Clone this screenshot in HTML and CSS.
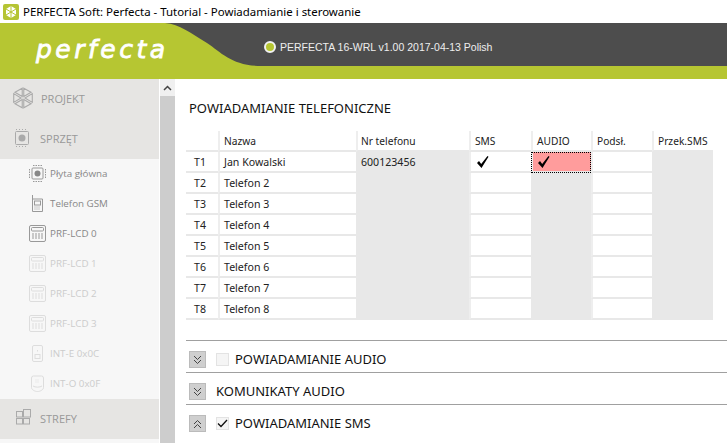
FILE: index.html
```html
<!DOCTYPE html>
<html lang="en">
<head>
    <meta charset="UTF-8">
    <title>PERFECTA Soft</title>
    <link rel="stylesheet" href="styles.css">
</head>
<body>
    <div class="titlebar">
        <svg class="app-icon" width="16" height="16" viewBox="0 0 16 16"><rect width="16" height="16" rx="2" fill="#b5c433"/><path d="M8 2l5 3v6l-5 3-5-3V5z" fill="#fff"/><path d="M8 2v12M3 5l10 6M13 5L3 11" stroke="#b5c433" stroke-width="1"/></svg>
        <span>PERFECTA Soft: Perfecta - Tutorial - Powiadamianie i sterowanie</span>
    </div>

    <div class="banner">
        <svg class="banner-bg" width="727" height="56" viewBox="0 0 727 56"><path d="M165 0C180 1 190 10 207 20C222 30 232 43 262 43H727V0Z" fill="#4d4d4d"/></svg>
        <div class="logo">perfecta</div>
        <div class="version"><span class="dot"></span>PERFECTA 16-WRL v1.00 2017-04-13 Polish</div>
    </div>

    <div class="main">
        <div class="sidebar">
            <div class="nav-head">
                <svg width="24" height="24" viewBox="0 0 22 22" fill="none" stroke="#aaa" stroke-width="1"><path d="M10.300 2v7.600L3.600 5.800zM11.700 2v7.600l6.700-3.800zM19.500 7v8l-6.700-4zM11.700 20v-7.600l6.700 3.800zM10.300 20v-7.600l-6.700 3.800zM2.500 7v8l6.700-4z"/></svg>
                <span>PROJEKT</span>
            </div>
            <div class="nav-head">
                <svg width="22" height="22" viewBox="0 0 22 22" fill="none" stroke="#aaa"><rect x="4.500" y="4.500" width="13" height="13" rx="1"/><circle cx="11" cy="11" r="3.500" fill="#aaa" stroke="none"/><path d="M5 2.500h12M5 19.500h12" stroke-dasharray="1 2"/></svg>
                <span>SPRZĘT</span>
            </div>
            <div class="nav-list">
                <div class="nav-item">
                    <svg width="17" height="17" viewBox="0 0 17 17" fill="none" stroke="#999"><rect x="3" y="3" width="11" height="11" rx="1"/><circle cx="8.500" cy="8.500" r="3" fill="#888" stroke="none"/><path d="M4 .5h10M4 16.500h10M.5 4v10M16.500 4v10" stroke-dasharray="1.500 1"/></svg>
                    <span>Płyta główna</span>
                </div>
                <div class="nav-item">
                    <svg width="17" height="17" viewBox="0 0 17 17" fill="none" stroke="#999"><path d="M3.500 0v4M3.500 4h10v12.500h-10z"/><rect x="5.500" y="6" width="6" height="4"/><path d="M5.500 12h6M5.500 14h6" stroke-dasharray="1 1"/></svg>
                    <span>Telefon GSM</span>
                </div>
                <div class="nav-item">
                    <svg width="17" height="17" viewBox="0 0 17 17" fill="none" stroke="#999"><rect x=".5" y=".5" width="16" height="16" rx="1.500"/><rect x="2.500" y="2.500" width="12" height="3.500" rx="1"/><path d="M3 9h11M3 11h11M3 13h11" stroke-dasharray="2 1"/></svg>
                    <span>PRF-LCD 0</span>
                </div>
                <div class="nav-item off">
                    <svg width="17" height="17" viewBox="0 0 17 17" fill="none" stroke="#ddd"><rect x=".5" y=".5" width="16" height="16" rx="1.500"/><rect x="2.500" y="2.500" width="12" height="3.500" rx="1"/><path d="M3 9h11M3 11h11M3 13h11" stroke-dasharray="2 1"/></svg>
                    <span>PRF-LCD 1</span>
                </div>
                <div class="nav-item off">
                    <svg width="17" height="17" viewBox="0 0 17 17" fill="none" stroke="#ddd"><rect x=".5" y=".5" width="16" height="16" rx="1.500"/><rect x="2.500" y="2.500" width="12" height="3.500" rx="1"/><path d="M3 9h11M3 11h11M3 13h11" stroke-dasharray="2 1"/></svg>
                    <span>PRF-LCD 2</span>
                </div>
                <div class="nav-item off">
                    <svg width="17" height="17" viewBox="0 0 17 17" fill="none" stroke="#ddd"><rect x=".5" y=".5" width="16" height="16" rx="1.500"/><rect x="2.500" y="2.500" width="12" height="3.500" rx="1"/><path d="M3 9h11M3 11h11M3 13h11" stroke-dasharray="2 1"/></svg>
                    <span>PRF-LCD 3</span>
                </div>
                <div class="nav-item off">
                    <svg width="17" height="17" viewBox="0 0 17 17" fill="none" stroke="#ddd"><rect x="3.500" y=".5" width="10" height="16" rx="1.500"/><rect x="6" y="9.500" width="5" height="4"/><path d="M8.500 5v1.500"/></svg>
                    <span>INT-E 0x0C</span>
                </div>
                <div class="nav-item off">
                    <svg width="17" height="17" viewBox="0 0 17 17" fill="none" stroke="#ddd"><path d="M2.500 3a2 2 0 0 1 2-2h8a2 2 0 0 1 2 2v9.500c0 2-3 4-6 4s-6-2-6-4z"/><path d="M4 11c2 1.500 7 1.500 9 0"/><path d="M6.500 5h4M6.500 7h4" stroke-dasharray="1 1"/></svg>
                    <span>INT-O 0x0F</span>
                </div>
            </div>
            <div class="nav-head">
                <svg width="22" height="22" viewBox="0 0 22 22" fill="none" stroke="#aaa"><rect x="5.500" y="4.500" width="6" height="5.500"/><rect x="5.500" y="11.500" width="6" height="5.500"/><rect x="12.500" y="11.500" width="6" height="5.500"/><rect x="12.500" y="2.500" width="7" height="7.500"/></svg>
                <span>STREFY</span>
            </div>
        </div>

        <div class="scrollbar">
            <svg class="scroll-up" width="9" height="6" viewBox="0 0 9 6" fill="none" stroke="#444" stroke-width="1.500"><path d="M1 5l3.500-3.500L8 5"/></svg>
            <div class="scroll-track"></div>
        </div>

        <div class="content">
            <h2 class="section-title">POWIADAMIANIE TELEFONICZNE</h2>
            <table class="phones">
                <thead>
                    <tr><th></th><th>Nazwa</th><th class="phone-col">Nr telefonu</th><th>SMS</th><th>AUDIO</th><th>Podsł.</th><th>Przek.SMS</th></tr>
                </thead>
                <tbody>
                    <tr>
                        <td class="num">T1</td><td>Jan Kowalski</td><td class="grey phone-col">600123456</td>
                        <td class="tick"><svg width="12" height="12" viewBox="0 0 12 12"><path d="M0 7l2-2 2.200 3L10.500 0l1 .8L4.500 12z" fill="#000"/></svg></td>
                        <td class="tick active"><svg width="12" height="12" viewBox="0 0 12 12"><path d="M0 7l2-2 2.200 3L10.500 0l1 .8L4.500 12z" fill="#000"/></svg></td>
                        <td></td><td class="grey"></td>
                    </tr>
                    <tr><td class="num">T2</td><td>Telefon 2</td><td class="grey"></td><td></td><td class="grey"></td><td></td><td class="grey"></td></tr>
                    <tr><td class="num">T3</td><td>Telefon 3</td><td class="grey"></td><td></td><td class="grey"></td><td></td><td class="grey"></td></tr>
                    <tr><td class="num">T4</td><td>Telefon 4</td><td class="grey"></td><td></td><td class="grey"></td><td></td><td class="grey"></td></tr>
                    <tr><td class="num">T5</td><td>Telefon 5</td><td class="grey"></td><td></td><td class="grey"></td><td></td><td class="grey"></td></tr>
                    <tr><td class="num">T6</td><td>Telefon 6</td><td class="grey"></td><td></td><td class="grey"></td><td></td><td class="grey"></td></tr>
                    <tr><td class="num">T7</td><td>Telefon 7</td><td class="grey"></td><td></td><td class="grey"></td><td></td><td class="grey"></td></tr>
                    <tr><td class="num">T8</td><td>Telefon 8</td><td class="grey"></td><td></td><td class="grey"></td><td></td><td class="grey"></td></tr>
                </tbody>
            </table>

            <div class="fold first">
                <div class="fold-btn"><svg width="9" height="10" viewBox="0 0 9 10" fill="none" stroke="#444"><path d="M1 1l3.500 3.500L8 1M1 5l3.500 3.500L8 5"/></svg></div>
                <div class="check"></div>
                <span>POWIADAMIANIE AUDIO</span>
            </div>
            <div class="fold">
                <div class="fold-btn"><svg width="9" height="10" viewBox="0 0 9 10" fill="none" stroke="#444"><path d="M1 1l3.500 3.500L8 1M1 5l3.500 3.500L8 5"/></svg></div>
                <span>KOMUNIKATY AUDIO</span>
            </div>
            <div class="fold">
                <div class="fold-btn"><svg width="9" height="10" viewBox="0 0 9 10" fill="none" stroke="#444"><path d="M1 5l3.500-3.500L8 5M1 9l3.500-3.500L8 9"/></svg></div>
                <div class="check on"><svg width="11" height="9" viewBox="0 0 11 9" fill="none" stroke="#111" stroke-width="1.300"><path d="M1 4.500l3 3 6-6.500"/></svg></div>
                <span>POWIADAMIANIE SMS</span>
            </div>
        </div>
    </div>
</body>
</html>
```
FILE: styles.css
```css
* {
    margin: 0;
    padding: 0;
    box-sizing: border-box;
}
html, body {
    width: 727px;
    height: 443px;
    overflow: hidden;
    background: #fff;
}
body {
    display: flex;
    flex-direction: column;
    font-family: "Open Sans", sans-serif;
}

.titlebar {
    height: 23px;
    display: flex;
    align-items: center;
    gap: 4px;
    padding-left: 3px;
    font-family: "Noto Sans", sans-serif;
    font-size: 11.45px;
    color: #000;
}

.banner {
    position: relative;
    height: 56px;
    background: #b6c632;
    display: flex;
    flex-shrink: 0;
}
.banner-bg {
    position: absolute;
    left: 0;
    top: 0;
}
.logo {
    position: relative;
    width: 264px;
    padding: 12px 0 0 36px;
    color: #fff;
    font-family: "DejaVu Sans", sans-serif;
    font-size: 25px;
    font-style: italic;
    letter-spacing: 3.500px;
    -webkit-text-stroke: 0.8px #fff;
}
.version {
    position: relative;
    height: 43px;
    padding-top: 4px;
    display: flex;
    align-items: center;
    gap: 4px;
    font-family: "Liberation Sans", sans-serif;
    font-size: 10.5px;
    color: #eee;
}
.dot {
    width: 12px;
    height: 12px;
    border-radius: 50%;
    border: 2px solid #f1f1f1;
    background: #b6c632;
}

.main {
    flex: 1;
    display: flex;
    min-height: 0;
}
.sidebar {
    width: 159px;
    background: #f7f7f7;
    flex-shrink: 0;
}
.nav-head {
    height: 40px;
    padding: 0 0 2px 11px;
    display: flex;
    align-items: center;
    gap: 7px;
    background: #e6e5e3;
    color: #999;
    font-size: 11px;
}
.nav-head:first-child {
    gap: 6px;
}
.nav-list {
    display: flex;
    flex-direction: column;
}
.nav-item {
    height: 30px;
    padding: 0 0 2px 29px;
    display: flex;
    align-items: center;
    gap: 4px;
    color: #888;
    font-size: 9.8px;
}
.nav-item.off {
    color: #ccc;
}

.scrollbar {
    width: 15px;
    margin-left: 1px;
    background: #f0f0f0;
    flex-shrink: 0;
    display: flex;
    flex-direction: column;
}
.scroll-up {
    margin: 6px auto 5px;
}
.scroll-track {
    flex: 1;
    background: #cdcdcd;
}

.content {
    flex: 1;
    min-width: 0;
    padding: 20px 0 0 11px;
    display: flex;
    flex-direction: column;
    color: #111;
}
.section-title {
    font-family: "Noto Sans", sans-serif;
    font-size: 13px;
    font-weight: 400;
    line-height: 18px;
    margin-left: 3px;
    margin-bottom: 14px;
}

.phones {
    border-collapse: separate;
    border-spacing: 0;
    table-layout: fixed;
    width: 527px;
    font-family: "Noto Sans", sans-serif;
    font-size: 10.6px;
    color: #222;
}
.phones th {
    height: 21px;
    text-align: left;
    font-size: 10.2px;
    font-weight: 400;
    padding-left: 4px;
    border-left: 2px solid #eee;
    border-bottom: 2px solid #e8e8e8;
}
.phones th:first-child {
    width: 32px;
    border-left: 0;
}
.phones th:nth-child(2) { width: 138px; }
.phones th:nth-child(3) { width: 113px; }
.phones th:nth-child(4) { width: 62px; }
.phones th:nth-child(5) { width: 60px; }
.phones th:nth-child(6) { width: 61px; }
.phones td {
    height: 21px;
    padding-left: 4px;
    border-bottom: 2px solid #e8e8e8;
    border-left: 2px solid #eee;
}
.phones .phone-col {
    padding-left: 3px;
}
.phones td.num {
    border-left: 0;
    padding-left: 8px;
}
.phones td.grey {
    background: #e8e8e8;
    border-left-color: #e8e8e8;
}
.phones td.tick {
    padding-left: 6px;
    line-height: 0;
}
.phones td.active {
    padding-left: 5px;
    background: #ff9c9c;
    outline: 1px dotted #000;
    outline-offset: -1px;
}

.fold {
    height: 32px;
    display: flex;
    align-items: center;
    padding: 6px 0 0 3px;
    border-top: 1px solid #a0a0a0;
    font-family: "Noto Sans", sans-serif;
    font-size: 13px;
    color: #111;
}
.fold span {
    padding-bottom: 2px;
}
.fold.first {
    margin-top: 20px;
}
.fold-btn {
    width: 17px;
    height: 17px;
    background: #cfcfcf;
    border: 1px solid #bbb;
    display: flex;
    align-items: center;
    justify-content: center;
    margin-right: 10px;
}
.check {
    width: 13px;
    height: 13px;
    background: #f5f5f5;
    border: 1px solid #e3e3e3;
    margin-right: 6px;
    display: flex;
    align-items: center;
    justify-content: center;
}
```
